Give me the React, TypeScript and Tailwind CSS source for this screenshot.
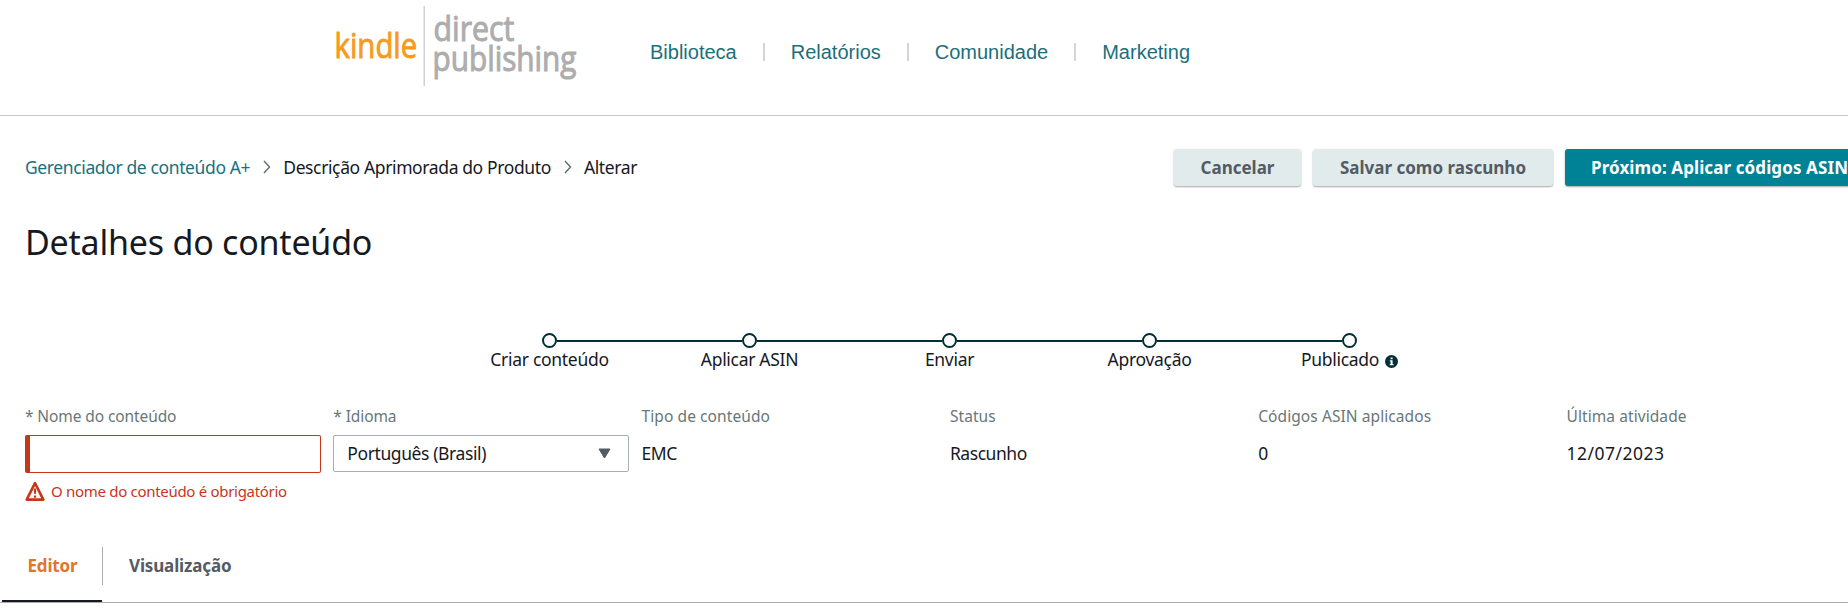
import { useState } from "react"

interface Field {
  label: string
  value: string
}

const navItems = ["Biblioteca", "Relatórios", "Comunidade", "Marketing"]

const steps = ["Criar conteúdo", "Aplicar ASIN", "Enviar", "Aprovação", "Publicado"]

const details: Field[] = [
  { label: "Tipo de conteúdo", value: "EMC" },
  { label: "Status", value: "Rascunho" },
  { label: "Códigos ASIN aplicados", value: "0" },
  { label: "Última atividade", value: "12/07/2023" },
]

function Logo() {
  return (
    <svg width="250" height="90" viewBox="330 0 250 90" className="block overflow-visible tracking-normal" fontFamily="'Open Sans', sans-serif">
      <text transform="translate(334.500 58) scale(0.84 1)" fontSize="35" fill="#f79b1c" stroke="#f79b1c" strokeWidth="0.9">
        kindle
      </text>
      <rect x="423.5" y="6" width="1.5" height="80" fill="#d2d2d2" />
      <text transform="translate(433.500 41) scale(0.89 1)" fontSize="34" fill="#adadad" stroke="#adadad" strokeWidth="1">
        direct
      </text>
      <text transform="translate(432.500 71) scale(0.875 1)" fontSize="34" fill="#adadad" stroke="#adadad" strokeWidth="1">
        publishing
      </text>
    </svg>
  )
}

function Chevron() {
  return (
    <svg width="8" height="14" viewBox="0 0 8 14" fill="none" stroke="#5f6b6d" strokeWidth="1.4">
      <path d="M1 1l5.5 6L1 13" />
    </svg>
  )
}

function WarningIcon() {
  return (
    <svg width="20" height="21" viewBox="0 0 20 21">
      <path d="M10 2.2L18.3 18.6H1.7Z" fill="#fff" stroke="#c7351a" strokeWidth="2.6" strokeLinejoin="round" />
      <path d="M10 7.5v5.3M10 14.4v2.3" stroke="#c7351a" strokeWidth="2.2" />
    </svg>
  )
}

function InfoIcon() {
  return (
    <svg width="13" height="13" viewBox="0 0 13 13">
      <circle cx="6.5" cy="6.5" r="6.5" fill="#002f36" />
      <path d="M5.6 2.5h2v1.7h-2zM4.8 5.3h2.8v3.8h.9v1.2H4.7V9.1h.9V6.5h-.8z" fill="#fff" />
    </svg>
  )
}

export default function App() {
  const [name, setName] = useState("")

  return (
    <div className="h-[616px] w-full overflow-hidden bg-white font-['Noto_Sans',sans-serif] text-[17.5px] leading-6 tracking-[-0.3px] text-[#16191f]">
      {/* Header */}
      <header className="flex h-[116px] border-b border-[#c8c8c8] pl-[330px]">
        <Logo />
        <nav className="ml-[70px] mt-[38px] flex h-7 items-center font-['Liberation_Sans',Arial,sans-serif] text-[20px] tracking-normal text-[#1b6f7a]">
          {navItems.map((item, i) => (
            <div key={item} className="flex items-center">
              {i > 0 && <span className="mx-[26px] h-[18px] w-[2px] bg-[#d6d6d6]" />}
              <a href="#">{item}</a>
            </div>
          ))}
        </nav>
      </header>

      {/* Breadcrumb and actions */}
      <div className="flex h-[103px] items-start pl-[25px] pt-[33px]">
        <div className="mt-[6px] flex w-[1149px] shrink-0 items-center whitespace-nowrap tracking-[-0.38px]">
          <a href="#" className="text-[#17717d]">Gerenciador de conteúdo A+</a>
          <span className="ml-[13px] mr-[12px]"><Chevron /></span>
          <span>Descrição Aprimorada do Produto</span>
          <span className="ml-[13px] mr-[12px]"><Chevron /></span>
          <span>Alterar</span>
        </div>
        <div className="flex shrink-0 gap-3 whitespace-nowrap text-[17px] font-bold tracking-normal">
          <button className="h-[37px] w-[127px] rounded-[3px] bg-[#e1ebeb] text-[#545b64] shadow-[0_1px_2px_rgba(0,0,0,0.35)]">
            Cancelar
          </button>
          <button className="h-[37px] w-[240px] rounded-[3px] bg-[#e1ebeb] text-[#545b64] shadow-[0_1px_2px_rgba(0,0,0,0.35)]">
            Salvar como rascunho
          </button>
          <button className="h-[37px] w-[320px] rounded-[3px] bg-[#008296] pl-[26px] text-left tracking-[0.1px] text-white shadow-[0_1px_2px_rgba(0,0,0,0.35)]">
            Próximo: Aplicar códigos ASIN
          </button>
        </div>
      </div>

      <h1 className="h-[114px] pl-[25px] text-[34px] leading-[46px] tracking-[-0.22px]">Detalhes do conteúdo</h1>

      {/* Progress */}
      <ol className="ml-[449px] flex">
        {steps.map((step, i) => (
          <li key={step} className="flex w-[200px] flex-col items-center">
            <div className="flex w-full items-center">
              <span className={`h-[2px] flex-1 ${i > 0 ? "bg-[#002f36]" : ""}`} />
              <span className="size-[15px] rounded-full border-2 border-[#002f36]" />
              <span className={`h-[2px] flex-1 ${i < steps.length - 1 ? "bg-[#002f36]" : ""}`} />
            </div>
            <span className="-mt-px flex items-center gap-[6px] pl-px">
              {step}
              {step === "Publicado" && <span className="mt-[4px]"><InfoIcon /></span>}
            </span>
          </li>
        ))}
      </ol>

      {/* Details */}
      <div className="mt-[33px] flex h-[143px] gap-[12.3px] whitespace-nowrap pl-[25px]">
        <div className="w-[296px] shrink-0">
          <label className="block text-[15.5px] tracking-[-0.1px] text-[#687778]">* Nome do conteúdo</label>
          <input
            value={name}
            onChange={(e) => setName(e.target.value)}
            className="mt-[7px] block h-[38px] w-full rounded-[2px] border border-l-[5px] border-[#c7351a] px-2 outline-none"
          />
          <p className="mt-[6px] flex items-center gap-[6px] text-[15px] text-[#c7351a]">
            <WarningIcon />
            <span>O nome do conteúdo é obrigatório</span>
          </p>
        </div>
        <div className="w-[296px] shrink-0">
          <label className="block text-[15.5px] tracking-[-0.1px] text-[#687778]">* Idioma</label>
          <button className="mt-[7px] flex h-[37px] w-full items-center justify-between rounded-[2px] border border-[#a5aeb0] pl-[13px] pr-[17px] tracking-[-0.4px]">
            <span className="-mt-[2px]">Português (Brasil)</span>
            <svg width="13" height="11" viewBox="0 0 13 11">
              <path d="M1 1h11L6.500 10z" fill="#545b64" stroke="#545b64" strokeLinejoin="round" />
            </svg>
          </button>
        </div>
        {details.map((d) => (
          <div key={d.label} className="w-[296px] shrink-0">
            <div className="text-[15.5px] tracking-[0.08px] text-[#687778]">{d.label}</div>
            <div className={`mt-[13px] ${d.value.includes("/") ? "tracking-[0.5px]" : "tracking-[-0.45px]"}`}>{d.value}</div>
          </div>
        ))}
      </div>

      {/* Tabs */}
      <div className="flex h-[56px] border-b border-[#a9adae] pl-[2px] text-[17px] font-bold tracking-[-0.15px]">
        <button className="flex w-[100px] flex-col items-center border-b-2 border-[#16191f] pl-px pt-[7px] text-[#e0762c]">
          Editor
        </button>
        <span className="h-[38px] w-px bg-[#a9adae]" />
        <button className="ml-[26px] flex pt-[7px] text-[#545b64]">Visualização</button>
      </div>
    </div>
  )
}
